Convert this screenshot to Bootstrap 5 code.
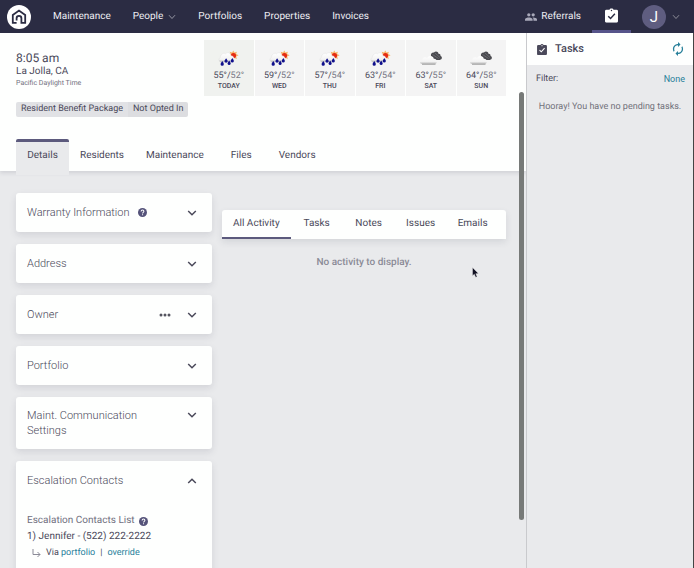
<!DOCTYPE html>
<html lang="en">
<head>
<meta charset="utf-8">
<meta name="viewport" content="width=device-width, initial-scale=1">
<title>Property details</title>
<link href="https://cdn.jsdelivr.net/npm/bootstrap@5.3.0/dist/css/bootstrap.min.css" rel="stylesheet">
<style>
:root{--ink:#4a495a;--navy:#2b2c43;--violet:#5c5a7d;--teal:#28809a;--canvas:#e9eaec}
body{font-family:Roboto,"Liberation Sans",sans-serif;font-size:10px;line-height:16px;color:var(--ink);background:var(--canvas);text-rendering:geometricPrecision}
svg{display:block;flex:none}
a{color:inherit;text-decoration:none}
button{color:inherit}
.topbar{background:var(--navy);color:#eeeef3;height:33px;padding:0 14px 0 7px}
.topbar .menu{gap:22px;margin-left:22px}
.topbar .people{gap:5px}
.tray{width:39px;height:33px;border:0;border-bottom:3px solid #56548a;background:none;color:#fff;padding:0;margin:0 11px}
.avatar-btn{background:none;border:0;padding:0;gap:6px}
.avatar{width:24px;height:24px;border-radius:50%;background:#5f5d80;color:#fff;font-size:15px;line-height:24px}
.shell{border-right:1px solid #444}
.content{min-width:0}
.masthead{background:#fefffe;padding:7px 20px 0 16px;box-shadow:0 2px 4px rgba(60,60,80,.14)}
.clock{padding-top:10px}
.time{font-size:12px}
.place{line-height:12px}
.zone{font-size:7px;line-height:10px;color:#727180}
.weather{width:302px;gap:1px}
.tile{background:#f4f4f4;flex:1 1 0;padding-top:10px;height:56px}
.tile.today{background:#f0f2ef}
.tile .deg{font-size:9px;line-height:12px;margin-top:3px}
.tile .lo{color:#777683}
.tile .day{font-size:7px;line-height:8px;font-weight:500}
.tags{margin-top:6px}
.tags span{background:#e1e2e5;font-size:9px;line-height:15px;padding:0 5px}
.tags span:first-child{border-radius:2px 0 0 2px}
.tags span:last-child{background:#dcdde0;border-radius:0 2px 2px 0}
.sections{margin-top:22px}
.sections a{padding:9px 11px 7px;min-width:53px;text-align:center}
.sections a.on{background:var(--canvas);border-top:3px solid var(--violet);border-radius:2px 2px 0 0;padding-top:6px;box-shadow:0 4px 0 var(--canvas)}
.body-grid{padding:22px 20px 0 16px;gap:10px}
.stack{width:196px;gap:12px;flex:none}
.panel{background:#fefffe;border-radius:3px;box-shadow:0 3px 7px rgba(60,65,85,.13)}
.panel>button,.panel .head{background:none;border:0;width:100%;min-height:39px;padding:11px 15px 11px 11px;text-align:left;font-size:11px;font-weight:300;line-height:15px}
.panel .head button{background:none;border:0;padding:0}
.panel .title{max-width:130px}
.contacts{padding:13px 11px 16px}
.contacts .label{color:#71707e}
.contacts .via{font-size:9px;padding-left:5px;gap:5px}
.link{color:var(--teal)}
.feed{margin-top:17px}
.feed nav{background:#fefffe;border-radius:3px 3px 0 0;box-shadow:0 3px 7px rgba(60,65,85,.12)}
.feed nav a{padding:6px 11px 5px;min-width:52px;text-align:center;border-bottom:2px solid transparent}
.feed nav a.on{border-color:var(--violet)}
.empty{margin-top:16px;font-weight:500;color:#8b8b97}
.side{width:167px;border-left:1px solid #c9cacd;flex:none}
.side header{background:#fefffe;padding:8px 8px 8px 10px}
.side header button{background:none;border:0;padding:0;color:var(--teal)}
.side header h2{font-size:11px;line-height:16px;font-weight:500}
.side .filter{padding:6px 8px 0 9px;font-size:9px}
.side .none{background:none;border:0;padding:0;color:var(--teal);font-size:9px}
.side .note{font-size:9px;color:#71717a;margin-top:12px}
.thumb{position:absolute;right:2px;top:11%;bottom:9%;width:5px;border-radius:3px;background:#777a78}
.pointer{position:absolute;left:472px;top:234px}
</style>
<script src="https://cdn.jsdelivr.net/npm/bootstrap@5.3.0/dist/js/bootstrap.bundle.min.js"></script>
</head>
<body class="vh-100 overflow-hidden d-flex flex-column">
<svg width="0" height="0" class="position-absolute" aria-hidden="true">
<defs>
<linearGradient id="cl" x1="0" y1="0" x2="0" y2="1"><stop offset="0" stop-color="#fff"/><stop offset=".7" stop-color="#f2f2f2"/><stop offset="1" stop-color="#b5b5b5"/></linearGradient>
<symbol id="down" viewBox="0 0 10 6"><path d="M1.200 1 5 4.700 8.800 1" fill="none" stroke="currentColor" stroke-width="1.500"/></symbol>
<symbol id="thin" viewBox="0 0 8 6"><path d="M1 1.200 4 4.500 7 1.200" fill="none" stroke="currentColor" stroke-width=".9"/></symbol>
<symbol id="help" viewBox="0 0 16 16"><circle cx="8" cy="8" r="8" fill="#55537a"/><path d="M5.500 6.200C5.500 4.500 6.600 3.700 8 3.700s2.500.9 2.500 2.200c0 1.800-2.400 1.900-2.400 3.900M8.100 11v2" fill="none" stroke="#fff" stroke-width="1.800"/></symbol>
<symbol id="clip" viewBox="0 0 18 20"><path fill="currentColor" d="M16 2h-4.180a3 3 0 0 0-5.640 0H2a2 2 0 0 0-2 2v14c0 1.100.9 2 2 2h14a2 2 0 0 0 2-2V4a2 2 0 0 0-2-2zM9 2a1 1 0 1 1 0 2 1 1 0 0 1 0-2z"/></symbol>
<symbol id="rain" viewBox="0 0 22 17">
<path d="m16 0 1.200 2.300 2.600-1-.8 2.600 2.600 1.200-2.600 1.200.8 2.700-2.600-1L16 10.300l-1.200-2.300-2.500 1 .8-2.700-2.500-1.200 2.500-1.200-.8-2.600 2.500 1z" fill="#f6b469"/><circle cx="16.200" cy="5.400" r="2.700" fill="#e62a12"/>
<path d="M4 12.500c-3 0-4.300-3.600-1.600-5C2.500 4 6 2 8 3.600c2-2.200 5.300-1 5.600 2.100 3.400-.3 4.600 4.800 1.400 6.300z" fill="url(#cl)" stroke="#ddd" stroke-width=".4"/>
<path d="M4.500 11c1 1.400 1.600 2.300 1.600 3.400a1.700 1.700 0 0 1-3.400 0c0-1.100.9-2 1.800-3.400zm4-2.800c1 1.400 1.700 2.200 1.700 3.300a1.800 1.800 0 0 1-3.500 0c0-1.100.9-1.900 1.800-3.300zm3.200 2.500c1 1.400 1.600 2.200 1.600 3.300a1.700 1.700 0 0 1-3.300 0c0-1.100.8-1.900 1.700-3.300zm3.300-2.800c1 1.400 1.600 2.300 1.600 3.400a1.700 1.700 0 0 1-3.300 0c0-1.100.8-2 1.700-3.400z" fill="#10108c"/></symbol>
<symbol id="cloudy" viewBox="0 0 24 15">
<path d="M12 5c-.4-2 .8-3.700 3-3.400 1.500-2 4.200-1 4.500 1.100 2 0 2.200 1.400 2 2.400 2 .5 1.900 3.600-.6 3.800h-6z" fill="#4b4b50"/><path d="m13.500 3.500 6 4M16 2l5 4.500" stroke="#77777c" stroke-width=".7"/>
<path d="M3.500 13C.3 12.800.2 9.500 3.300 9.200 3.200 6.400 6.300 5.600 8 7c1.400-3 6.200-2.800 6.800.7 3.400-.4 4.400 4.600 1 5.300z" fill="url(#cl)"/><path d="M3 13.300h13.500" stroke="#a5a5a5"/></symbol>
</defs></svg>

<header class="topbar d-flex align-items-center flex-shrink-0">
  <a href="#" aria-label="Home"><svg width="24" height="24" viewBox="0 0 24 24"><circle cx="12" cy="12" r="12" fill="#fff"/><path d="M9.600 17.900H5.800V10L12 5.500l6.200 4.500v7.900h-3.800v-4.700c0-3.200-4.800-3.200-4.800 0v2.400" fill="none" stroke="#2b2c43" stroke-width="1.800"/></svg></a>
  <nav class="menu d-flex">
    <a href="#">Maintenance</a>
    <a href="#" class="people d-flex align-items-center">People<svg width="8" height="6" opacity=".6"><use href="#thin"/></svg></a>
    <a href="#">Portfolios</a><a href="#">Properties</a><a href="#">Invoices</a>
  </nav>
  <a href="#" class="ms-auto d-flex align-items-center gap-1"><svg width="12" height="8" viewBox="0 0 22 14" fill="#a9a9ba"><circle cx="7" cy="3" r="3"/><circle cx="15" cy="3" r="3"/><path d="M0 14v-2.500C0 9 4.700 8 7 8s7 1 7 3.500V14zM15.500 14v-2.500c0-1.500-.7-2.600-1.800-3.400C16.500 7.700 22 9 22 11.500V14z"/></svg>Referrals</a>
  <button class="tray d-flex align-items-center justify-content-center" aria-label="Tasks"><svg width="13" height="15" viewBox="0 0 18 20"><use href="#clip"/><path d="m4.500 11 3.200 3.200 6-6.500" fill="none" stroke="#2b2c43" stroke-width="2"/></svg></button>
  <button class="avatar-btn d-flex align-items-center" aria-label="Account"><span class="avatar">J</span><svg width="8" height="6" opacity=".6" color="#ddd"><use href="#thin"/></svg></button>
</header>

<div class="shell d-flex flex-grow-1 overflow-hidden">
  <main class="content flex-grow-1 position-relative overflow-hidden">
    <div class="masthead">
      <div class="d-flex justify-content-between">
        <div class="clock">
          <div class="time">8:05 am</div>
          <div class="place">La Jolla, CA</div>
          <div class="zone">Pacific Daylight Time</div>
        </div>
        <div class="weather d-flex text-center">
          <div class="tile today"><svg class="mx-auto" width="21" height="17"><use href="#rain"/></svg><div class="deg">55°/<span class="lo">52°</span></div><div class="day">TODAY</div></div>
          <div class="tile"><svg class="mx-auto" width="21" height="17"><use href="#rain"/></svg><div class="deg">59°/<span class="lo">52°</span></div><div class="day">WED</div></div>
          <div class="tile"><svg class="mx-auto" width="21" height="17"><use href="#rain"/></svg><div class="deg">57°/<span class="lo">54°</span></div><div class="day">THU</div></div>
          <div class="tile"><svg class="mx-auto" width="21" height="17"><use href="#rain"/></svg><div class="deg">63°/<span class="lo">54°</span></div><div class="day">FRI</div></div>
          <div class="tile"><svg class="mx-auto" width="24" height="17"><use href="#cloudy"/></svg><div class="deg">63°/<span class="lo">55°</span></div><div class="day">SAT</div></div>
          <div class="tile"><svg class="mx-auto" width="24" height="17"><use href="#cloudy"/></svg><div class="deg">64°/<span class="lo">58°</span></div><div class="day">SUN</div></div>
        </div>
      </div>
      <div class="tags d-flex"><span>Resident Benefit Package</span><span>Not Opted In</span></div>
      <nav class="sections d-flex">
        <a href="#" class="on">Details</a><a href="#">Residents</a><a href="#">Maintenance</a><a href="#">Files</a><a href="#">Vendors</a>
      </nav>
    </div>

    <div class="body-grid d-flex align-items-start">
      <div class="stack d-flex flex-column">
        <section class="panel"><button class="d-flex align-items-center"><span>Warranty Information</span><svg class="ms-2" width="9" height="9"><use href="#help"/></svg><svg class="ms-auto" width="10" height="6"><use href="#down"/></svg></button></section>
        <section class="panel"><button class="d-flex align-items-center justify-content-between">Address<svg width="10" height="6"><use href="#down"/></svg></button></section>
        <section class="panel"><div class="head d-flex align-items-center">Owner<button class="ms-auto" aria-label="More"><svg width="12" height="4" fill="#55545f"><circle cx="2" cy="2" r="1.500"/><circle cx="6" cy="2" r="1.500"/><circle cx="10" cy="2" r="1.500"/></svg></button><button class="ms-3" aria-label="Expand"><svg width="10" height="6"><use href="#down"/></svg></button></div></section>
        <section class="panel"><button class="d-flex align-items-center justify-content-between">Portfolio<svg width="10" height="6"><use href="#down"/></svg></button></section>
        <section class="panel"><button class="d-flex justify-content-between"><span class="title">Maint. Communication Settings</span><svg class="mt-1" width="10" height="6"><use href="#down"/></svg></button></section>
        <section class="panel"><button class="d-flex align-items-center justify-content-between" aria-expanded="true">Escalation Contacts<svg width="10" height="6" viewBox="0 0 10 6"><path d="M1.200 5 5 1.300 8.800 5" fill="none" stroke="currentColor" stroke-width="1.500"/></svg></button>
          <div class="contacts">
            <div class="label d-flex align-items-center">Escalation Contacts List<svg class="ms-1" width="9" height="9"><use href="#help"/></svg></div>
            <div class="who">1) Jennifer - (522) 222-2222</div>
            <div class="via d-flex align-items-center"><svg width="9" height="9" viewBox="0 0 9 9" fill="none" stroke="#8b8b97"><path d="M1 0v5.500h7M5.500 3 8 5.500 5.500 8"/></svg><span>Via <a href="#" class="link">portfolio</a></span><span>|</span><a href="#" class="link">override</a></div>
          </div>
        </section>
      </div>
      <section class="feed flex-grow-1">
        <nav class="d-flex"><a href="#" class="on">All Activity</a><a href="#">Tasks</a><a href="#">Notes</a><a href="#">Issues</a><a href="#">Emails</a></nav>
        <p class="empty text-center mb-0">No activity to display.</p>
      </section>
    </div>
    <div class="thumb"></div>
    <svg class="pointer" width="7" height="11" viewBox="0 0 7 11"><path d="M.5.5v8.300l1.800-1.600 1.400 3.100 1.400-.6-1.300-3 2.600-.2z" fill="#111122" stroke="#eee" stroke-width=".4"/></svg>
  </main>

  <aside class="side">
    <header class="d-flex align-items-center"><svg width="10" height="11" viewBox="0 0 18 20"><use href="#clip"/><path d="m4.500 11 3.200 3.200 6-6.500" fill="none" stroke="#fff" stroke-width="2"/></svg><h2 class="ms-2 mb-0">Tasks</h2>
      <button class="ms-auto" aria-label="Refresh"><svg width="14" height="14" viewBox="2 1 20 22" fill="currentColor"><path d="M12 6v3l4-4-4-4v3c-4.420 0-8 3.580-8 8 0 1.570.46 3.030 1.240 4.260L6.700 14.800c-.45-.83-.7-1.790-.7-2.800 0-3.310 2.690-6 6-6zm6.760 1.740L17.300 9.200c.44.84.7 1.790.7 2.800 0 3.310-2.690 6-6 6v-3l-4 4 4 4v-3c4.420 0 8-3.580 8-8 0-1.570-.46-3.030-1.240-4.260z"/></svg></button></header>
    <div class="filter d-flex justify-content-between align-items-center"><span>Filter:</span><button class="none">None</button></div>
    <p class="note text-center mb-0">Hooray! You have no pending tasks.</p>
  </aside>
</div>
</body>
</html>
